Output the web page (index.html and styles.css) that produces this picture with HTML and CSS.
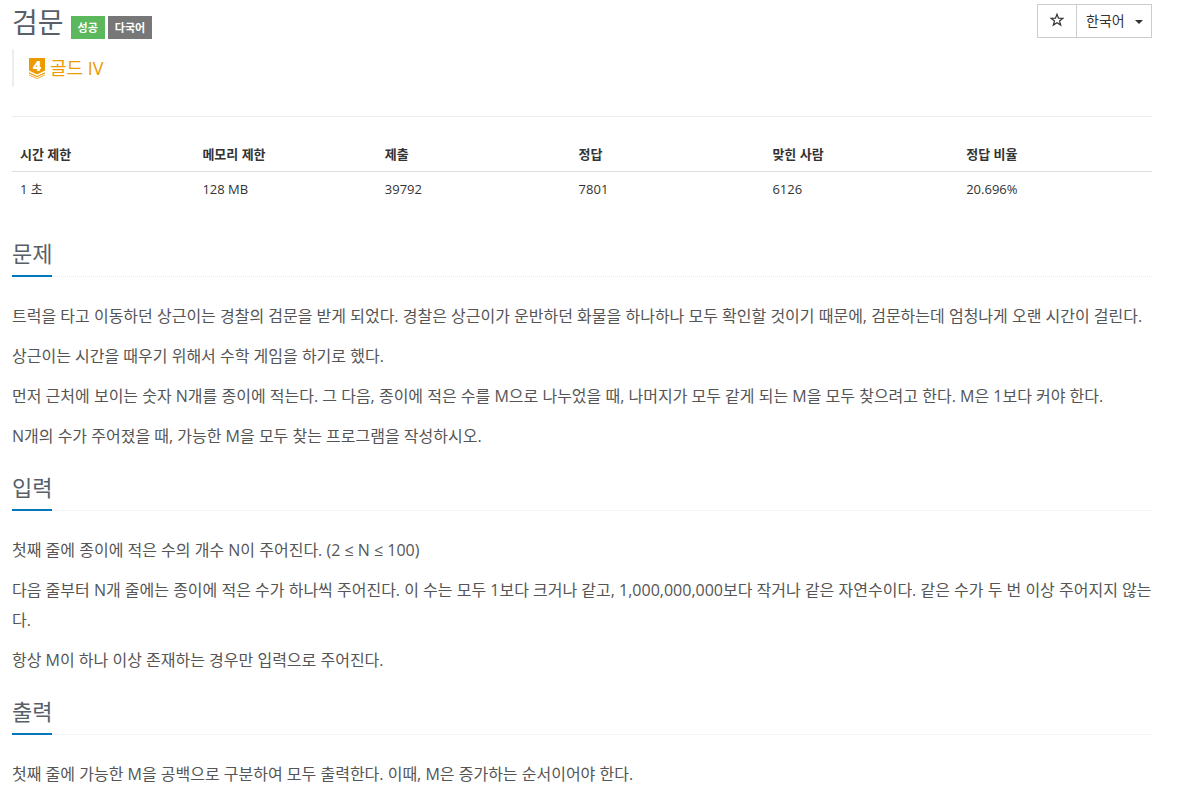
FILE: index.html
```
<!DOCTYPE html>
<html lang="ko">
<head>
    <meta charset="UTF-8">
    <meta name="viewport" content="width=device-width, initial-scale=1.0">
    <title>검문</title>
    <link rel="stylesheet" href="styles.css">
</head>
<body>
    <div class="container">
        <header class="page-header">
            <div class="title-row">
                <h1>검문</h1>
                <span class="label label-success">성공</span>
                <span class="label label-default">다국어</span>
                <div class="btn-group">
                    <button type="button" class="btn-star" aria-label="즐겨찾기">
                        <svg width="14" height="14" viewBox="0 0 14 14" aria-hidden="true">
                            <path d="M7 1.2 8.5 5.2 12.8 5.4 9.5 8 10.7 12.1 7 9.8 3.3 12.1 4.5 8 1.2 5.4 5.5 5.2Z" fill="none" stroke="#333" stroke-width="1.2"/>
                        </svg>
                    </button>
                    <div class="select-wrap">
                        <select class="lang-select" aria-label="언어">
                            <option>한국어</option>
                            <option>원문</option>
                        </select>
                    </div>
                </div>
            </div>
            <blockquote class="tier">
                <svg class="tier-icon" width="16" height="21" viewBox="0 0 16 21" aria-hidden="true">
                    <path d="M0 0H16V12.6L8 16.6 0 12.6Z" fill="#ec9a00"/>
                    <path d="M0 14.2 8 18.1 16 14.2V15.4L8 19.3 0 15.4Z" fill="#ec9a00"/>
                    <path d="M0 16.6 8 20.3 16 16.6V17.3L8 21 0 17.3Z" fill="#ec9a00"/>
                    <text x="8" y="13" class="tier-number">4</text>
                </svg>
                <a href="#">골드 IV</a>
            </blockquote>
        </header>

        <table class="info-table">
            <thead>
                <tr>
                    <th class="col-limit">시간 제한</th>
                    <th class="col-limit">메모리 제한</th>
                    <th class="col-count">제출</th>
                    <th class="col-count">정답</th>
                    <th class="col-count">맞힌 사람</th>
                    <th class="col-count">정답 비율</th>
                </tr>
            </thead>
            <tbody>
                <tr>
                    <td>1 초</td>
                    <td>128 MB</td>
                    <td>39792</td>
                    <td>7801</td>
                    <td>6126</td>
                    <td>20.696%</td>
                </tr>
            </tbody>
        </table>

        <section class="problem-section">
            <div class="headline"><h2>문제</h2></div>
            <p>트럭을 타고 이동하던 상근이는 경찰의 검문을 받게 되었다. 경찰은 상근이가 운반하던 화물을 하나하나 모두 확인할 것이기 때문에, 검문하는데 엄청나게 오랜 시간이 걸린다.</p>
            <p>상근이는 시간을 때우기 위해서 수학 게임을 하기로 했다.</p>
            <p>먼저 근처에 보이는 숫자 N개를 종이에 적는다. 그 다음, 종이에 적은 수를 M으로 나누었을 때, 나머지가 모두 같게 되는 M을 모두 찾으려고 한다. M은 1보다 커야 한다.</p>
            <p>N개의 수가 주어졌을 때, 가능한 M을 모두 찾는 프로그램을 작성하시오.</p>
        </section>

        <section class="problem-section">
            <div class="headline"><h2>입력</h2></div>
            <p>첫째 줄에 종이에 적은 수의 개수 N이 주어진다. (2 ≤ N ≤ 100)</p>
            <p>다음 줄부터 N개 줄에는 종이에 적은 수가 하나씩 주어진다. 이 수는 모두 1보다 크거나 같고, 1,000,000,000보다 작거나 같은 자연수이다. 같은 수가 두 번 이상 주어지지 않는다.</p>
            <p>항상 M이 하나 이상 존재하는 경우만 입력으로 주어진다.</p>
        </section>

        <section class="problem-section">
            <div class="headline"><h2>출력</h2></div>
            <p>첫째 줄에 가능한 M을 공백으로 구분하여 모두 출력한다. 이때, M은 증가하는 순서이어야 한다.</p>
        </section>
    </div>
</body>
</html>
```
FILE: styles.css
```
* {
    box-sizing: border-box;
}

body {
    margin: 0;
    background: #fff;
    color: #333;
    font-family: "Open Sans", "Noto Sans CJK KR", sans-serif;
    font-size: 13px;
    line-height: 18px;
}

.container {
    padding: 4px 25px 0 12px;
}

h1, h2 {
    margin: 0;
    color: #585f69;
    font-weight: 400;
}

.page-header {
    padding-bottom: 29px;
    border-bottom: 1px solid #eee;
}

.title-row {
    display: flex;
    align-items: flex-start;
    gap: 3px;
}

h1 {
    margin-right: 4px;
    font-size: 28px;
    line-height: 36px;
}

.label {
    margin-top: 12px;
    padding: 0 7px;
    color: #fff;
    font-size: 11px;
    font-weight: 700;
    line-height: 23px;
}

.label-success {
    background: #5cb85c;
}

.label-default {
    background: #777;
}

.btn-group {
    display: flex;
    height: 34px;
    margin-left: auto;
    border: 1px solid #ccc;
}

.btn-star {
    display: flex;
    align-items: center;
    justify-content: center;
    width: 39px;
    padding: 0 0 2px;
    border: 0;
    border-right: 1px solid #ccc;
    background: #fff;
    cursor: pointer;
}

.select-wrap {
    position: relative;
}

.select-wrap::after {
    content: "";
    position: absolute;
    top: 15px;
    right: 8px;
    border: 4px solid transparent;
    border-top-color: #333;
    border-bottom: 0;
    pointer-events: none;
}

.lang-select {
    height: 100%;
    padding: 0 26px 2px 9px;
    border: 0;
    border-radius: 0;
    background: #fff;
    color: #333;
    font-family: inherit;
    font-size: 14px;
    appearance: none;
    cursor: pointer;
}

.tier {
    display: flex;
    align-items: center;
    gap: 5px;
    height: 38px;
    margin: 9px 0 0;
    padding-left: 15px;
    border-left: 2px solid #eee;
    font-size: 18px;
}

.tier a {
    color: #ec9a00;
    text-decoration: none;
}

.tier-icon {
    overflow: visible;
}

.tier-number {
    fill: #fff;
    font-size: 14px;
    font-weight: 800;
    line-height: 16px;
    text-anchor: middle;
}

.info-table {
    width: 100%;
    margin: 20px 0 31px;
    border-collapse: collapse;
    table-layout: fixed;
}

.info-table th,
.info-table td {
    padding: 8px;
    text-align: left;
}

.info-table th {
    border-bottom: 1px solid #ddd;
    font-weight: 700;
}

.col-limit {
    width: 16%;
}

.col-count {
    width: 17%;
}

.headline {
    margin-bottom: 24px;
    border-bottom: 1px dotted #e4e9f0;
}

.headline h2 {
    display: inline-block;
    margin-bottom: -1px;
    padding-bottom: 6px;
    border-bottom: 2px solid #0076c0;
    font-size: 22px;
    line-height: 32px;
    vertical-align: top;
}

.problem-section p {
    margin: 0 0 10px;
    color: #555;
    font-size: 16px;
    line-height: 30px;
}

.problem-section {
    margin-bottom: 20px;
}
```
